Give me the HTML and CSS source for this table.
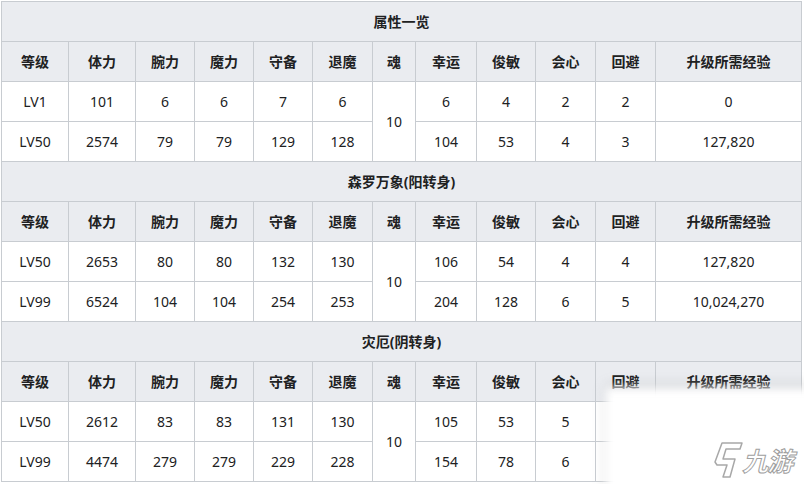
FILE: index.html
```html
<!DOCTYPE html>
<html lang="zh">
<head>
<meta charset="utf-8">
<link rel="stylesheet" href="styles.css">
</head>
<body>
<div class="page">
<table class="stats">
  <colgroup>
    <col class="c67"><col class="c67"><col class="c59"><col class="c59"><col class="c59"><col class="c60"><col class="c43"><col class="c61"><col class="c59"><col class="c60"><col class="c60"><col class="c146">
  </colgroup>
  <tbody>
    <tr><th class="title" colspan="12">属性一览</th></tr>
    <tr class="head"><th>等级</th><th>体力</th><th>腕力</th><th>魔力</th><th>守备</th><th>退魔</th><th>魂</th><th>幸运</th><th>俊敏</th><th>会心</th><th>回避</th><th>升级所需经验</th></tr>
    <tr><td>LV1</td><td>101</td><td>6</td><td>6</td><td>7</td><td>6</td><td rowspan="2">10</td><td>6</td><td>4</td><td>2</td><td>2</td><td>0</td></tr>
    <tr><td>LV50</td><td>2574</td><td>79</td><td>79</td><td>129</td><td>128</td><td>104</td><td>53</td><td>4</td><td>3</td><td>127,820</td></tr>

    <tr><th class="title" colspan="12">森罗万象(阳转身)</th></tr>
    <tr class="head"><th>等级</th><th>体力</th><th>腕力</th><th>魔力</th><th>守备</th><th>退魔</th><th>魂</th><th>幸运</th><th>俊敏</th><th>会心</th><th>回避</th><th>升级所需经验</th></tr>
    <tr><td>LV50</td><td>2653</td><td>80</td><td>80</td><td>132</td><td>130</td><td rowspan="2">10</td><td>106</td><td>54</td><td>4</td><td>4</td><td>127,820</td></tr>
    <tr><td>LV99</td><td>6524</td><td>104</td><td>104</td><td>254</td><td>253</td><td>204</td><td>128</td><td>6</td><td>5</td><td>10,024,270</td></tr>

    <tr><th class="title" colspan="12">灾厄(阴转身)</th></tr>
    <tr class="head"><th>等级</th><th>体力</th><th>腕力</th><th>魔力</th><th>守备</th><th>退魔</th><th>魂</th><th>幸运</th><th>俊敏</th><th>会心</th><th>回避</th><th>升级所需经验</th></tr>
    <tr><td>LV50</td><td>2612</td><td>83</td><td>83</td><td>131</td><td>130</td><td rowspan="2">10</td><td>105</td><td>53</td><td>5</td><td></td><td></td></tr>
    <tr><td>LV99</td><td>4474</td><td>279</td><td>279</td><td>229</td><td>228</td><td>154</td><td>78</td><td>6</td><td></td><td></td></tr>
  </tbody>
</table>
<div class="veil"></div>
<div class="mark">
  <svg class="mark-logo" width="32" height="38" viewBox="0 0 32 38" fill="none" stroke="#a8a8a8" stroke-width="1.5" stroke-linejoin="round">
    <path d="M10 2 H30 L28 8 H14 L11 18 H23 L18 36 H11 L15 24 H5 L3 21 Z"/>
  </svg>
  <span class="mark-text">九游</span>
</div>
</div>
</body>
</html>
```
FILE: styles.css
```css
html, body {
  margin: 0;
  padding: 0;
  background: #ffffff;
}
.page {
  position: relative;
  width: 804px;
  height: 484px;
  overflow: hidden;
  padding: 1px 0 0 1px;
  box-sizing: border-box;
}
.stats {
  border-collapse: collapse;
  table-layout: fixed;
  width: 800px;
  font-family: "Noto Sans", "Noto Sans CJK SC", sans-serif;
  font-size: 14px;
  color: #202122;
}
.c67 { width: 67px; }
.c59 { width: 59px; }
.c60 { width: 60px; }
.c43 { width: 43px; }
.c61 { width: 61px; }
.c146 { width: 146px; }
.stats th, .stats td {
  border: 1px solid #c8ccd1;
  height: 39px;
  padding: 0;
  text-align: center;
  vertical-align: middle;
  line-height: 20px;
}
.stats th {
  background: #eaecf0;
  font-weight: 700;
}
.stats td {
  background: #ffffff;
  font-weight: 400;
}
.veil {
  position: absolute;
  left: 606px;
  top: 388px;
  width: 220px;
  height: 120px;
  background: #ffffff;
  filter: blur(4px);
  box-shadow: 0 -2px 8px rgba(120, 120, 120, 0.35);
}
.mark {
  position: absolute;
  left: 712px;
  top: 441px;
  width: 92px;
  display: flex;
  align-items: center;
  gap: 1px;
  white-space: nowrap;
}
.mark-text {
  display: inline-block;
  font-family: "Noto Sans CJK SC", sans-serif;
  font-size: 26px;
  font-weight: 700;
  line-height: 36px;
  color: #ffffff;
  -webkit-text-stroke: 1px #a0a0a0;
  transform: skewX(-14deg);
  letter-spacing: -1px;
}
```
